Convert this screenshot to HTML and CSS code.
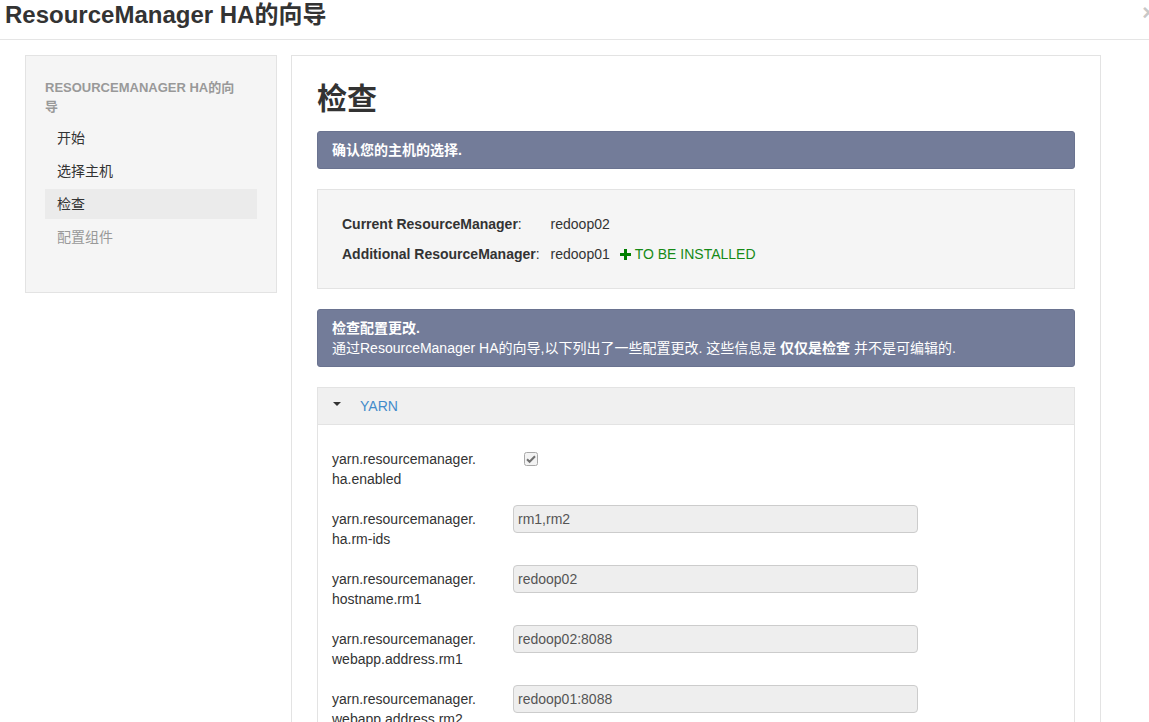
FILE: index.html
```html
<!DOCTYPE html>
<html lang="zh">
<head>
<meta charset="utf-8">
<title>ResourceManager HA的向导</title>
<link rel="stylesheet" href="styles.css">
</head>
<body>
<header class="modal-header">
  <h1 class="modal-title">ResourceManager HA的向导</h1>
  <span class="close">×</span>
</header>
<div class="wizard">
  <aside class="sidebar">
    <div class="side-title">RESOURCEMANAGER HA的向导</div>
    <ul class="steps">
      <li class="step">开始</li>
      <li class="step">选择主机</li>
      <li class="step active">检查</li>
      <li class="step disabled">配置组件</li>
    </ul>
  </aside>
  <main class="panel">
    <h2 class="page-title">检查</h2>
    <div class="alert"><b>确认您的主机的选择.</b></div>
    <div class="well">
      <div class="host-grid">
        <div class="host-label"><b>Current ResourceManager</b>:</div>
        <div class="host-value">redoop02</div>
        <div class="host-label"><b>Additional ResourceManager</b>:</div>
        <div class="host-value">redoop01 <span class="install"><svg class="plus" width="11" height="11" viewBox="0 0 11 11"><path d="M4 0h3v4h4v3H7v4H4V7H0V4h4z" fill="#008000"/></svg>TO BE INSTALLED</span></div>
      </div>
    </div>
    <div class="alert alert-two">
      <b>检查配置更改.</b><br>
      通过ResourceManager HA的向导,以下列出了一些配置更改. 这些信息是 <b>仅仅是检查</b> 并不是可编辑的.
    </div>
    <section class="accordion">
      <div class="acc-head"><span class="caret"></span><span class="acc-name">YARN</span></div>
      <div class="acc-body">
        <div class="prop-row">
          <div class="prop-label">yarn.resourcemanager.<br>ha.enabled</div>
          <div class="prop-value"><svg class="checkbox" width="14" height="14" viewBox="0 0 14 14"><rect x="0.5" y="0.5" width="13" height="13" rx="2" fill="#f3f3f3" stroke="#a9a9a9"/><path d="M3 7.2l2.6 2.6L11 4.2" fill="none" stroke="#707070" stroke-width="2"/></svg></div>
        </div>
        <div class="prop-row">
          <div class="prop-label">yarn.resourcemanager.<br>ha.rm-ids</div>
          <div class="prop-value"><div class="input">rm1,rm2</div></div>
        </div>
        <div class="prop-row">
          <div class="prop-label">yarn.resourcemanager.<br>hostname.rm1</div>
          <div class="prop-value"><div class="input">redoop02</div></div>
        </div>
        <div class="prop-row">
          <div class="prop-label">yarn.resourcemanager.<br>webapp.address.rm1</div>
          <div class="prop-value"><div class="input">redoop02:8088</div></div>
        </div>
        <div class="prop-row">
          <div class="prop-label">yarn.resourcemanager.<br>webapp.address.rm2</div>
          <div class="prop-value"><div class="input">redoop01:8088</div></div>
        </div>
        <div class="prop-row">
          <div class="prop-label">yarn.resourcemanager.<br>hostname.rm2</div>
          <div class="prop-value"><div class="input">redoop01</div></div>
        </div>
      </div>
    </section>
  </main>
</div>
</body>
</html>
```
FILE: styles.css
```css
html, body {
  margin: 0;
  padding: 0;
  overflow: hidden;
  height: 722px;
  background: #fff;
}
body {
  font-family: "Liberation Sans", Arial, "Noto Sans CJK SC", sans-serif;
  font-size: 14px;
  color: #333;
}
.modal-header {
  display: flex;
  align-items: flex-start;
  height: 39px;
  border-bottom: 1px solid #e5e5e5;
  padding-left: 5px;
}
.modal-title {
  margin: 0;
  font-size: 24px;
  line-height: 30px;
  font-weight: bold;
  color: #333;
}
.close {
  margin-left: auto;
  margin-right: -6px;
  font-size: 22px;
  line-height: 26px;
  font-weight: bold;
  color: #c8c8c8;
}
.wizard {
  display: flex;
  align-items: flex-start;
  gap: 14px;
  padding: 15px 48px 0 25px;
}
.sidebar {
  width: 252px;
  box-sizing: border-box;
  background: #f5f5f5;
  border: 1px solid #e3e3e3;
  padding: 22px 19px 40px 19px;
  flex: none;
}
.side-title {
  font-size: 13px;
  font-weight: bold;
  color: #999;
  line-height: 19px;
  padding-right: 16px;
  margin-bottom: 7px;
}
.steps {
  list-style: none;
  margin: 0;
  padding: 0;
  display: flex;
  flex-direction: column;
  gap: 3px;
}
.step {
  line-height: 30px;
  padding-left: 12px;
  color: #333;
}
.step.active {
  background: #ebebeb;
}
.step.disabled {
  color: #999;
}
.panel {
  flex: 1;
  border: 1px solid #e3e3e3;
  padding: 21px 25px 40px 25px;
  min-height: 800px;
}
.page-title {
  margin: 0 0 10px 0;
  font-size: 30px;
  line-height: 44px;
  font-weight: bold;
  color: #333;
}
.alert {
  background: #737c99;
  border: 1px solid #6a7390;
  border-radius: 3px;
  color: #fff;
  font-size: 14px;
  line-height: 20px;
  padding: 8px 14px;
  margin-bottom: 20px;
}
.well {
  background: #f5f5f5;
  border: 1px solid #e3e3e3;
  padding: 19px 24px;
  margin-bottom: 20px;
}
.host-grid {
  display: grid;
  grid-template-columns: max-content 1fr;
  column-gap: 11px;
}
.host-label, .host-value {
  line-height: 30px;
}
.install {
  color: #168a16;
  margin-left: 6px;
}
.plus {
  vertical-align: -1px;
  margin-right: 4px;
}
.accordion {
  border: 1px solid #e3e3e3;
}
.acc-head {
  height: 36px;
  background: #f0f0f0;
  border-bottom: 1px solid #e3e3e3;
  display: flex;
  align-items: center;
  padding-left: 15px;
}
.caret {
  width: 0;
  height: 0;
  border-left: 4px solid transparent;
  border-right: 4px solid transparent;
  border-top: 4px solid #333;
  margin-top: -4px;
}
.acc-name {
  margin-left: 19px;
  color: #428bca;
}
.acc-body {
  padding: 20px 14px 0 14px;
}
.prop-row {
  display: flex;
  align-items: flex-start;
  margin-bottom: 16px;
}
.prop-label {
  width: 181px;
  flex: none;
  padding-top: 4px;
  line-height: 20px;
}
.prop-value {
  flex: none;
}
.checkbox {
  display: block;
  margin: 7px 0 0 11px;
}
.input {
  width: 395px;
  height: 26px;
  line-height: 26px;
  background: #eee;
  border: 1px solid #ccc;
  border-radius: 4px;
  padding: 0 4px;
  color: #555;
}
```
